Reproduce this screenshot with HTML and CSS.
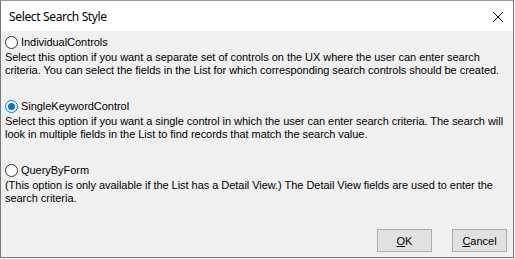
FILE: index.html
```html
<!DOCTYPE html>
<html>
<head>
<meta charset="utf-8">
<link rel="stylesheet" href="styles.css">
</head>
<body>
<div class="window">
  <div class="titlebar">
    <span class="title">Select Search Style</span>
    <svg class="close" width="12" height="12" viewBox="0 0 12 12"><path d="M1 1 L11 11 M11 1 L1 11" stroke="#000" stroke-width="1" fill="none"/></svg>
  </div>
  <div class="content">
    <div class="group">
      <div class="option"><span class="radio"></span><span class="label">IndividualControls</span></div>
      <div class="desc">Select this option if you want a separate set of controls on the UX where the user can enter search<br>criteria. You can select the fields in the List for which corresponding search controls should be created.</div>
    </div>
    <div class="group">
      <div class="option"><span class="radio checked"></span><span class="label">SingleKeywordControl</span></div>
      <div class="desc">Select this option if you want a single control in which the user can enter search criteria. The search will<br>look in multiple fields in the List to find records that match the search value.</div>
    </div>
    <div class="group">
      <div class="option"><span class="radio"></span><span class="label">QueryByForm</span></div>
      <div class="desc">(This option is only available if the List has a Detail View.) The Detail View fields are used to enter the<br>search criteria.</div>
    </div>
    <div class="buttons">
      <button class="btn"><u>O</u>K</button>
      <button class="btn"><u>C</u>ancel</button>
    </div>
  </div>
</div>
</body>
</html>
```
FILE: styles.css
```css
html, body {
  margin: 0;
  padding: 0;
  background: #ffffff;
}
.window {
  width: 512px;
  height: 256px;
  border: 1px solid #777777;
  border-top-color: #9a9a9a;
  display: flex;
  flex-direction: column;
  background: #f0f0f0;
}
.titlebar {
  height: 30px;
  background: #ffffff;
  display: flex;
  align-items: center;
  justify-content: space-between;
  padding: 0 8px 0 8px;
}
.title {
  font-family: "Noto Sans", sans-serif;
  font-size: 12px;
  letter-spacing: -0.35px;
  color: #000;
  padding-top: 1px;
}
.close {
  margin-right: 1px;
  margin-top: 1px;
}
.content {
  flex: 1;
  display: flex;
  flex-direction: column;
  padding: 5px 0 0 4px;
  font-family: "Liberation Sans", Arial, sans-serif;
  font-size: 11px;
  line-height: 13px;
  letter-spacing: -0.04px;
  color: #000;
}
.group {
  display: flex;
  flex-direction: column;
  gap: 2px;
  height: 64px;
}
.option {
  display: flex;
  align-items: center;
  gap: 3px;
  height: 13px;
}
.radio {
  width: 11px;
  height: 11px;
  border: 1px solid #333333;
  border-radius: 50%;
  background: #ffffff;
  box-sizing: content-box;
  display: flex;
  align-items: center;
  justify-content: center;
}
.radio.checked {
  border-color: #0078d7;
}
.radio.checked::after {
  content: "";
  width: 7px;
  height: 7px;
  border-radius: 50%;
  background: #0078d7;
}
.desc {
  white-space: nowrap;
}
.buttons {
  margin-top: auto;
  display: flex;
  justify-content: flex-end;
  gap: 20px;
  padding: 0 6px 5px 0;
}
.btn {
  width: 55px;
  height: 23px;
  background: #e1e1e1;
  border: 1px solid #adadad;
  font-family: "Liberation Sans", Arial, sans-serif;
  font-size: 11px;
  color: #000;
  padding: 0;
  margin: 0;
}
```
